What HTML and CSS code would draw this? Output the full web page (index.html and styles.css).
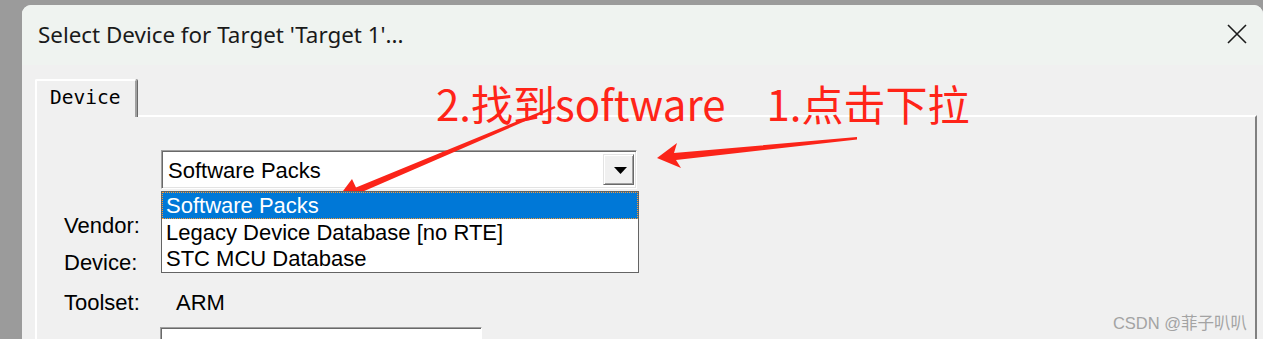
FILE: index.html
```html
<!DOCTYPE html>
<html lang="en">
<head>
    <meta charset="UTF-8">
    <title>Select Device for Target</title>
    <link rel="stylesheet" href="styles.css">
</head>
<body>
    <div class="window">
        <div class="titlebar">
            <span class="title">Select Device for Target 'Target 1'...</span>
            <svg class="close" width="20" height="20" viewBox="0 0 20 20">
                <path d="M1 1 L19 19 M19 1 L1 19" stroke="#1b1b1b" stroke-width="1.6" fill="none"/>
            </svg>
        </div>
        <div class="content">
            <div class="tab">Device</div>
            <div class="panel">
                <div class="form">
                    <div class="row row-combo">
                        <span class="label"></span>
                        <div class="combo">
                            <span class="combo-value">Software Packs</span>
                            <span class="combo-btn">
                                <svg width="13" height="7" viewBox="0 0 13 7"><path d="M0 0 H13 L6.5 7 Z" fill="#000"/></svg>
                            </span>
                            <!-- open dropdown list -->
                            <ul class="combo-list">
                                <li class="selected">Software Packs</li>
                                <li>Legacy Device Database [no RTE]</li>
                                <li>STC MCU Database</li>
                            </ul>
                        </div>
                    </div>
                    <div class="row row-vendor"><span class="label">Vendor:</span></div>
                    <div class="row"><span class="label">Device:</span></div>
                    <div class="row row-toolset"><span class="label">Toolset:</span><span class="value">ARM</span></div>
                    <div class="row row-text"><span class="label"></span><div class="textbox"></div></div>
                </div>
            </div>
        </div>
    </div>

    <!-- red annotations -->
    <div class="notes">
        <span>2.找到software</span>
        <span>1.点击下拉</span>
    </div>
    <svg class="arrows" width="1263" height="339" viewBox="0 0 1263 339">
        <polygon fill="#fb2419" points="657,158 677,143 674,153 857,137 857,139.5 676,160 681,168"/>
        <polygon fill="#fb2419" points="337,199 352,179 356,187.5 554.5,106 555.5,108 358.5,193.5 362,202"/>
    </svg>
    <div class="watermark">CSDN @菲子叭叭</div>
</body>
</html>
```

FILE: styles.css
```css
body {
    margin: 0;
    background: #9b9b9b;
    font-family: "Liberation Sans", Arial, sans-serif;
    overflow: hidden;
    height: 339px;
}
.window {
    margin: 5px 0 0 22px;
    height: 340px;
    background: #f0f0f0;
    border-radius: 9px 9px 0 0;
    overflow: hidden;
}
.titlebar {
    height: 60px;
    background: #eff3f0;
    display: flex;
    align-items: center;
    justify-content: space-between;
    padding: 0 16px 2px 16px;
    box-sizing: border-box;
}
.title {
    font-family: "Noto Sans", "Open Sans", sans-serif;
    font-size: 22.4px;
    color: #1a1a1a;
}
.close {
    display: block;
    margin-bottom: 1px;
}
.content {
    padding: 14px 6px 0 13px;
}
.tab {
    position: relative;
    z-index: 1;
    width: 102px;
    height: 38px;
    box-sizing: border-box;
    margin-bottom: -2px;
    background: #f0f0f0;
    border-top: 2px solid #fff;
    border-left: 2px solid #fff;
    border-right: 2px solid #a0a0a0;
    box-shadow: 1px 0 0 #696969;
    border-radius: 2px 2px 0 0;
    font-family: "DejaVu Sans Mono", monospace;
    font-size: 19.5px;
    line-height: 34px;
    padding-left: 13px;
    color: #000;
}
.panel {
    border-top: 2px solid #fff;
    border-left: 2px solid #fff;
    border-right: 2px solid #808080;
    height: 240px;
}
.form {
    padding: 33px 0 0 27px;
    font-size: 22px;
    color: #000;
}
.row {
    display: flex;
    align-items: center;
    height: 37px;
}
.label {
    width: 97px;
    flex: none;
}
.value {
    margin-left: 15px;
}
.row-combo {
    height: 39px;
}
.row-vendor {
    margin-top: 18px;
}
.row-toolset {
    margin-top: 3px;
    height: 38px;
}
.row-text {
    margin-top: 5px;
    align-items: flex-start;
}
.combo {
    position: relative;
    width: 476px;
    height: 39px;
    box-sizing: border-box;
    display: flex;
    align-items: center;
    background: #fff;
    border: 1px solid;
    border-color: #a0a0a0 #fff #fff #a0a0a0;
    box-shadow: inset 1px 1px 0 #696969, inset -1px -1px 0 #e3e3e3;
}
.combo-value {
    flex: 1;
    padding: 2px 0 0 6px;
}
.combo-btn {
    width: 31px;
    height: 31px;
    box-sizing: border-box;
    margin-right: 2px;
    background: #f0f0f0;
    border: 1px solid;
    border-color: #e3e3e3 #696969 #696969 #e3e3e3;
    box-shadow: inset 1px 1px 0 #fff, inset -1px -1px 0 #a0a0a0;
    display: flex;
    align-items: center;
    justify-content: center;
}
.combo-btn svg {
    display: block;
    margin: 2px 0 0 3px;
}
.combo-list {
    position: absolute;
    top: 40px;
    left: -1px;
    width: 478px;
    box-sizing: border-box;
    margin: 0;
    padding: 0;
    list-style: none;
    background: #fff;
    border: 1px solid #646464;
    z-index: 2;
}
.combo-list li {
    height: 26.5px;
    line-height: 28px;
    padding-left: 4px;
    white-space: nowrap;
}
.combo-list .selected {
    background: #0078d7;
    color: #fff;
    outline: 1px dotted #ff9a30;
    outline-offset: -1px;
}
.textbox {
    width: 322px;
    height: 40px;
    margin-left: -1px;
    box-sizing: border-box;
    background: #fff;
    border: 1px solid;
    border-color: #a0a0a0 #fff #fff #a0a0a0;
    box-shadow: inset 1px 1px 0 #696969;
}
.notes {
    position: absolute;
    top: 82px;
    left: 436px;
    display: flex;
    gap: 41px;
    font-family: "Noto Sans CJK SC", sans-serif;
    font-size: 42px;
    line-height: 1;
    color: #ff2418;
    white-space: nowrap;
}
.arrows {
    position: absolute;
    top: 0;
    left: 0;
}
.watermark {
    position: absolute;
    right: 16px;
    top: 310px;
    font-family: "Liberation Sans", "Noto Sans CJK SC", sans-serif;
    font-size: 16.5px;
    color: #a3a3a3;
}
```
